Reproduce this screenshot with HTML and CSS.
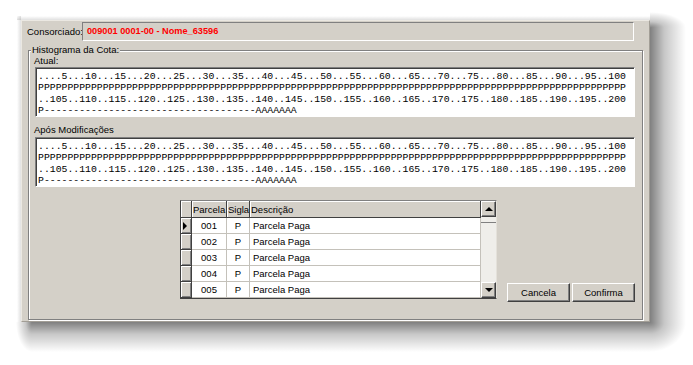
FILE: index.html
```html
<!DOCTYPE html>
<html lang="pt">
<head>
  <meta charset="UTF-8">
  <title>Histograma da Cota</title>
  <link rel="stylesheet" href="styles.css">
</head>
<body>
  <div class="desk">
    <div class="window">
      <div class="header">
        <span class="header-label">Consorciado:</span>
        <div class="header-field">009001 0001-00 - Nome_63596</div>
      </div>

      <fieldset class="group">
        <legend>Histograma da Cota:</legend>

        <div class="caption caption-first">Atual:</div>
        <div class="histo">....5...10...15...20...25...30...35...40...45...50...55...60...65...70...75...80...85...90...95..100
PPPPPPPPPPPPPPPPPPPPPPPPPPPPPPPPPPPPPPPPPPPPPPPPPPPPPPPPPPPPPPPPPPPPPPPPPPPPPPPPPPPPPPPPPPPPPPPPPPPP
..105..110..115..120..125..130..135..140..145..150..155..160..165..170..175..180..185..190..195..200
P------------------------------------AAAAAAA</div>

        <div class="caption">Após Modificações</div>
        <div class="histo">....5...10...15...20...25...30...35...40...45...50...55...60...65...70...75...80...85...90...95..100
PPPPPPPPPPPPPPPPPPPPPPPPPPPPPPPPPPPPPPPPPPPPPPPPPPPPPPPPPPPPPPPPPPPPPPPPPPPPPPPPPPPPPPPPPPPPPPPPPPPP
..105..110..115..120..125..130..135..140..145..150..155..160..165..170..175..180..185..190..195..200
P------------------------------------AAAAAAA</div>

        <div class="bottom">
          <div class="grid-wrap">
            <table class="grid">
              <colgroup>
                <col class="c-ind">
                <col class="c-parcela">
                <col class="c-sigla">
                <col class="c-desc">
              </colgroup>
              <tr class="head">
                <th class="ind"></th>
                <th>Parcela</th>
                <th>Sigla</th>
                <th>Descrição</th>
              </tr>
              <tr>
                <td class="ind"><span class="pointer"></span></td>
                <td class="num">001</td>
                <td class="num">P</td>
                <td>Parcela Paga</td>
              </tr>
              <tr>
                <td class="ind"></td>
                <td class="num">002</td>
                <td class="num">P</td>
                <td>Parcela Paga</td>
              </tr>
              <tr>
                <td class="ind"></td>
                <td class="num">003</td>
                <td class="num">P</td>
                <td>Parcela Paga</td>
              </tr>
              <tr>
                <td class="ind"></td>
                <td class="num">004</td>
                <td class="num">P</td>
                <td>Parcela Paga</td>
              </tr>
              <tr>
                <td class="ind"></td>
                <td class="num">005</td>
                <td class="num">P</td>
                <td>Parcela Paga</td>
              </tr>
            </table>
            <div class="scroll">
              <div class="sb-btn"><span class="arrow-up"></span></div>
              <div class="sb-thumb"></div>
              <div class="sb-track"></div>
              <div class="sb-btn"><span class="arrow-down"></span></div>
            </div>
          </div>

          <div class="buttons">
            <button class="btn">Cancela</button>
            <button class="btn">Confirma</button>
          </div>
        </div>
      </fieldset>
    </div>
  </div>
</body>
</html>
```

FILE: styles.css
```css
body {
  margin: 0;
  background: #fff;
  font-family: "Liberation Sans", Arial, sans-serif;
  font-size: 9.5px;
  color: #000;
}
/* white page with the dialog's soft drop shadow painted behind it */
.desk {
  box-sizing: border-box;
  width: 693px;
  height: 365px;
  padding: 20px 0 0 21px;
  background:
    linear-gradient(to right, rgba(0,0,0,.5), rgba(0,0,0,.22) 40%, rgba(0,0,0,0)) 650px 28px / 36px 294px no-repeat,
    linear-gradient(to bottom, rgba(0,0,0,.5), rgba(0,0,0,.22) 40%, rgba(0,0,0,0)) 32px 322px / 618px 30px no-repeat,
    radial-gradient(36px 30px at 0 0, rgba(0,0,0,.5), rgba(0,0,0,.22) 40%, rgba(0,0,0,0)) 650px 322px / 36px 30px no-repeat,
    radial-gradient(36px 16px at 0 100%, rgba(0,0,0,.5), rgba(0,0,0,.22) 40%, rgba(0,0,0,0)) 650px 12px / 36px 16px no-repeat,
    radial-gradient(16px 30px at 100% 0, rgba(0,0,0,.5), rgba(0,0,0,.22) 40%, rgba(0,0,0,0)) 16px 322px / 16px 30px no-repeat,
    linear-gradient(to top, rgba(0,0,0,.12), rgba(0,0,0,0)) 17px 16px / 633px 4px no-repeat,
    linear-gradient(to left, rgba(0,0,0,.12), rgba(0,0,0,0)) 17px 16px / 4px 306px no-repeat,
    #fff;
}
.window {
  box-sizing: border-box;
  width: 629px;
  height: 302px;
  padding: 1px 6px 0 5px;
  background: #d4d0c8;
  border: 1px solid;
  border-color: #ebe8e2 #a29e96 #a29e96 #ebe8e2;
}
.header {
  display: flex;
  align-items: center;
  height: 19px;
}
.header-label {
  width: 55px;
  flex: none;
}
.header-field {
  box-sizing: border-box;
  width: 552px;
  height: 19px;
  padding: 3px 0 0 4px;
  border: 1px solid;
  border-color: #808080 #fff #fff #808080;
  color: #f00;
  font-weight: bold;
  font-size: 9.2px;
}
.group {
  box-sizing: border-box;
  width: 615px;
  height: 276px;
  margin: 3px 0 0 1px;
  padding: 0 7px 0 6px;
  border: 1px solid #808080;
  box-shadow: 1px 1px 0 #fff, inset 1px 1px 0 #fff;
}
.group legend {
  margin-left: -4px;
  padding: 0 1px;
  line-height: 12px;
  background: #d4d0c8;
}
.caption {
  margin-left: -1px;
  line-height: 12px;
}
.caption-first {
  margin-top: -1px;
}
.histo + .caption {
  padding-top: 6px;
  line-height: 14px;
}
.histo {
  box-sizing: border-box;
  height: 50px;
  padding: 3px 0 0 2px;
  background: #fff;
  border: 1px solid;
  border-color: #808080 #fff #fff #808080;
  box-shadow: inset 1px 1px 0 #404040;
  font-family: "Liberation Mono", "Courier New", monospace;
  font-size: 9.8px;
  line-height: 11.3px;
  white-space: pre;
  overflow: hidden;
}
.bottom {
  display: flex;
  justify-content: space-between;
  align-items: flex-end;
  margin-top: 13px;
}
.grid-wrap {
  display: flex;
  margin-left: 145px;
  border: 1px solid;
  border-color: #808080 #e4e1da #404040 #404040;
}
.grid {
  width: 300px;
  table-layout: fixed;
  border-collapse: separate;
  border-spacing: 0;
  background: #fff;
}
.c-ind { width: 11px; }
.c-parcela { width: 35px; }
.c-sigla { width: 23px; }
.c-desc { width: 231px; }
.grid th,
.grid td {
  box-sizing: border-box;
  height: 16px;
  padding: 0 0 0 3px;
  font-weight: normal;
  text-align: left;
  white-space: nowrap;
  overflow: hidden;
  border-right: 1px solid #c4c1ba;
  border-bottom: 1px solid #c4c1ba;
}
.grid .head th {
  height: 17px;
  padding-left: 1px;
  background: #d4d0c8;
  border-right-color: #404040;
  border-bottom-color: #404040;
  box-shadow: inset 1px 1px 0 #fff;
}
.grid .ind {
  padding: 0 0 0 1px;
  background: #d4d0c8;
  border-right-color: #404040;
  border-bottom-color: #404040;
  box-shadow: inset 1px 1px 0 #fff, inset -1px -1px 0 #808080;
}
.grid td.num {
  padding: 0;
  text-align: center;
}
.pointer {
  display: block;
  width: 0;
  height: 0;
  margin-left: 1px;
  border-left: 4px solid #000;
  border-top: 4px solid transparent;
  border-bottom: 4px solid transparent;
}
.scroll {
  display: flex;
  flex-direction: column;
  width: 15px;
  background: #d4d0c8;
}
.sb-btn {
  box-sizing: border-box;
  height: 16px;
  display: flex;
  align-items: center;
  justify-content: center;
  border: 1px solid;
  border-color: #fff #404040 #404040 #fff;
  box-shadow: inset -1px -1px 0 #808080;
}
.sb-thumb {
  box-sizing: border-box;
  height: 6px;
  border-bottom: 1px solid #808080;
  background: #efeeea;
}
.sb-track {
  flex: 1;
  background: #efeeea;
}
.arrow-up,
.arrow-down {
  width: 0;
  height: 0;
  border-left: 4px solid transparent;
  border-right: 4px solid transparent;
}
.arrow-up {
  border-bottom: 4px solid #000;
}
.arrow-down {
  border-top: 4px solid #000;
}
.buttons {
  display: flex;
  gap: 2px;
  margin-bottom: -3px;
}
.btn {
  box-sizing: border-box;
  width: 63px;
  height: 19px;
  padding: 0;
  background: #d4d0c8;
  border: 1px solid;
  border-color: #fff #404040 #404040 #fff;
  box-shadow: inset -1px -1px 0 #808080;
  font-family: "Liberation Sans", Arial, sans-serif;
  font-size: 9.5px;
  color: #000;
}
```
